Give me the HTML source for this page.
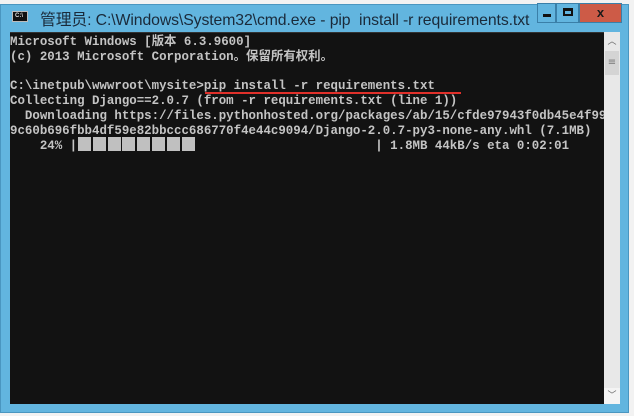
<!DOCTYPE html>
<html><head><meta charset="utf-8"><style>
*{margin:0;padding:0;box-sizing:border-box}
body{width:634px;height:416px;background:#f2f2f2;position:relative;overflow:hidden}
.frame{position:absolute;left:0;top:4px;width:629px;height:409px;background:#62b5df;border:1px solid #4a96c0}
.title{position:absolute;left:40px;top:7px;font:15.8px "Liberation Sans","Noto Sans CJK SC",sans-serif;color:#1a2a3a;white-space:pre;letter-spacing:-0.1px}
.icon{position:absolute;left:12px;top:11px;width:16px;height:11px;background:#111;border:1px solid #bbb}
.icon span{position:absolute;left:2px;top:1px;font:bold 6px "Liberation Sans",sans-serif;color:#ddd}
.btn{position:absolute;top:3px;height:20px;border:1px solid #3a7fa8}
.con{position:absolute;left:10px;top:32px;width:594px;height:372px;background:#121212;border-top:1px solid #333}
pre{position:absolute;left:10px;top:35px;font:bold 12.43px/14.8px "Liberation Mono","Noto Sans CJK SC",monospace;color:#c4c4c4;white-space:pre}
.sb{position:absolute;left:604px;top:32px;width:16px;height:372px;background:#e8e8e8}
.blk{position:absolute;top:137px;width:13px;height:14px;background:#c0c0c0}
</style></head><body>
<div class="frame"></div>
<div class="icon"><span>C:\</span></div>
<div class="title">管理员: C:\Windows\System32\cmd.exe - pip  install -r requirements.txt</div>
<div class="btn" style="left:537px;width:19px;background:#62b5df"><div style="position:absolute;left:5px;top:10px;width:8px;height:3px;background:#111"></div></div>
<div class="btn" style="left:556px;width:23px;background:#62b5df"><div style="position:absolute;left:6px;top:4px;width:10px;height:8px;border:2px solid #111;border-top-width:3px"></div></div>
<div class="btn" style="left:579px;width:43px;background:#cd5b47;color:#1a1a1a;font:bold 13px 'Liberation Sans',sans-serif;text-align:center;line-height:17px">x</div>
<div class="con"></div>
<pre>Microsoft Windows [版本 6.3.9600]
(c) 2013 Microsoft Corporation。保留所有权利。

C:\inetpub\wwwroot\mysite>pip install -r requirements.txt
Collecting Django==2.0.7 (from -r requirements.txt (line 1))
  Downloading https://files.pythonhosted.org/packages/ab/15/cfde97943f0db45e4f99
9c60b696fbb4df59e82bbccc686770f4e44c9094/Django-2.0.7-py3-none-any.whl (7.1MB)
    24% |                                        | 1.8MB 44kB/s eta 0:02:01</pre>
<div style="position:absolute;left:205px;top:92px;width:256px;height:2px;background:#e0302a"></div>
<div class="blk" style="left:78px"></div><div class="blk" style="left:93px"></div><div class="blk" style="left:108px"></div><div class="blk" style="left:122px"></div><div class="blk" style="left:137px"></div><div class="blk" style="left:152px"></div><div class="blk" style="left:167px"></div><div class="blk" style="left:182px"></div>
<div class="sb">
<div style="position:absolute;top:2px;left:0;width:16px;height:16px;text-align:center;font:9px 'DejaVu Sans',sans-serif;color:#666;line-height:16px">︿</div>
<div style="position:absolute;top:19px;left:1px;width:14px;height:24px;background:#d4d4d4;text-align:center;font:10px 'DejaVu Sans',sans-serif;color:#777;line-height:24px">≡</div>
<div style="position:absolute;top:356px;left:0;width:16px;height:16px;text-align:center;font:9px 'DejaVu Sans',sans-serif;color:#666;line-height:16px;background:#f4f4f4">﹀</div>
</div>
</body></html>
